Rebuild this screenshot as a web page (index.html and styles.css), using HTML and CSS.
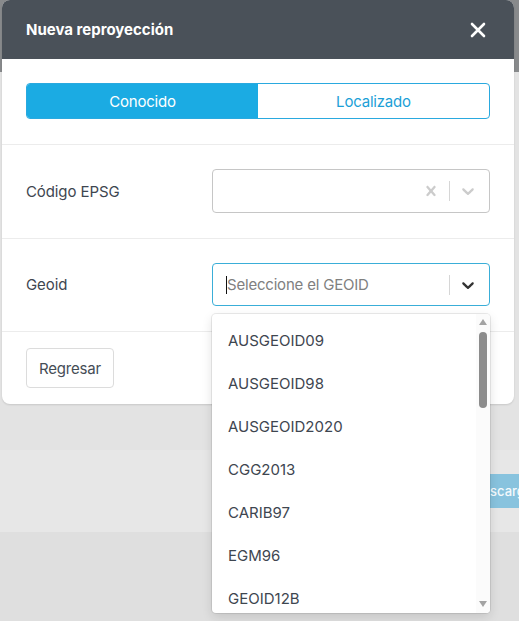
FILE: index.html
```
<!DOCTYPE html>
<html lang="es">
<head>
<meta charset="utf-8">
<title>Nueva reproyección</title>
<link rel="stylesheet" href="styles.css">
</head>
<body>
<div class="page">
  <div class="bg-top"></div>
  <div class="bg-a"></div>
  <div class="bg-b"><span class="bg-btn">Descargar</span></div>
  <div class="bg-c"></div>
</div>

<div class="modal">
  <div class="modal-header">
    <h1 class="modal-title">Nueva reproyección</h1>
    <svg class="close-icon" viewBox="0 0 16 16" width="16" height="16"><path d="M2 2 L14 14 M14 2 L2 14" stroke="#fff" stroke-width="2.6" stroke-linecap="round"/></svg>
  </div>

  <div class="section">
    <div class="tabs">
      <div class="tab tab-active">Conocido</div>
      <div class="tab">Localizado</div>
    </div>
  </div>

  <div class="section row">
    <div class="label">Código EPSG</div>
    <div class="select">
      <div class="value"></div>
      <div class="indicator"><svg viewBox="0 0 20 20" width="20" height="20"><path fill="#cccccc" d="M14.348 14.849c-0.469 0.469-1.229 0.469-1.697 0l-2.651-3.030-2.651 3.029c-0.469 0.469-1.229 0.469-1.697 0-0.469-0.469-0.469-1.229 0-1.697l2.758-3.15-2.759-3.152c-0.469-0.469-0.469-1.228 0-1.697s1.228-0.469 1.697 0l2.652 3.031 2.651-3.031c0.469-0.469 1.228-0.469 1.697 0s0.469 1.229 0 1.697l-2.758 3.152 2.758 3.150c0.469 0.469 0.469 1.229 0 1.698z"/></svg></div>
      <span class="sep"></span>
      <div class="indicator"><svg viewBox="0 0 20 20" width="20" height="20"><path fill="#cccccc" d="M4.516 7.548c0.436-0.446 1.043-0.481 1.576 0l3.908 3.747 3.908-3.747c0.533-0.481 1.141-0.446 1.574 0 0.436 0.445 0.408 1.197 0 1.615-0.406 0.418-4.695 4.502-4.695 4.502-0.217 0.223-0.502 0.335-0.787 0.335s-0.57-0.112-0.789-0.335c0 0-4.287-4.084-4.695-4.502s-0.436-1.170 0-1.615z"/></svg></div>
    </div>
  </div>

  <div class="section row">
    <div class="label">Geoid</div>
    <div class="select-wrap">
      <div class="select select-focus">
        <div class="value"><span class="caret"></span><span class="placeholder">Seleccione el GEOID</span></div>
        <span class="sep"></span>
        <div class="indicator"><svg viewBox="0 0 20 20" width="20" height="20"><path fill="#333333" d="M4.516 7.548c0.436-0.446 1.043-0.481 1.576 0l3.908 3.747 3.908-3.747c0.533-0.481 1.141-0.446 1.574 0 0.436 0.445 0.408 1.197 0 1.615-0.406 0.418-4.695 4.502-4.695 4.502-0.217 0.223-0.502 0.335-0.787 0.335s-0.57-0.112-0.789-0.335c0 0-4.287-4.084-4.695-4.502s-0.436-1.170 0-1.615z"/></svg></div>
      </div>
      <div class="menu">
        <ul class="options">
          <li>AUSGEOID09</li>
          <li>AUSGEOID98</li>
          <li>AUSGEOID2020</li>
          <li>CGG2013</li>
          <li>CARIB97</li>
          <li>EGM96</li>
          <li>GEOID12B</li>
        </ul>
        <div class="scrollbar">
          <span class="arrow-up"></span>
          <span class="thumb"></span>
          <span class="track-fill"></span>
          <span class="arrow-down"></span>
        </div>
      </div>
    </div>
  </div>

  <div class="footer">
    <button class="btn">Regresar</button>
  </div>
</div>
</body>
</html>
```
FILE: styles.css
```
* { box-sizing: border-box; }
html, body { margin: 0; padding: 0; }
body {
  width: 519px;
  height: 621px;
  overflow: hidden;
  position: relative;
  font-family: Inter, "Liberation Sans", sans-serif;
  background: #dedede;
}

.page { display: flex; flex-direction: column; height: 621px; }
.bg-top { height: 72px; background: #888a8c; }
.bg-a { height: 378px; background: #e3e3e3; }
.bg-b {
  height: 82px;
  background: #e7e7e7;
  display: flex;
  align-items: center;
}
.bg-btn {
  margin-left: 459px;
  height: 34px;
  padding: 0 14px;
  background: #88c3de;
  color: #f4fafd;
  font-size: 13px;
  font-weight: 500;
  display: flex;
  align-items: center;
  white-space: nowrap;
}
.bg-c { flex: 1; background: #dfdfdf; }

.modal {
  position: absolute;
  top: 0;
  left: 2px;
  width: 512px;
  background: #fff;
  border-radius: 8px;
  box-shadow: 0 1px 2px rgba(0,0,0,0.12);
}
.modal-header {
  height: 59px;
  background: #4a5159;
  border-radius: 8px 8px 0 0;
  display: flex;
  align-items: center;
  justify-content: space-between;
  padding: 0 28px 0 24px;
}
.modal-title {
  margin: 0;
  color: #fff;
  font-size: 15px;
  font-weight: 700;
  letter-spacing: 0;
}
.close-icon { display: block; }

.section {
  padding: 24px 24px 25px;
  border-bottom: 1px solid #ececec;
}
.tabs {
  display: flex;
  height: 36px;
  border: 1px solid #2aa9df;
  border-radius: 4px;
  overflow: hidden;
}
.tab {
  flex: 1;
  display: flex;
  align-items: center;
  justify-content: center;
  font-size: 15px;
  color: #1c9fd7;
  letter-spacing: -0.2px;
}
.tab-active { background: #1babe3; color: #fff; }

.row { display: flex; align-items: center; }
.row .label {
  width: 186px;
  font-size: 15px;
  color: #3e4650;
  letter-spacing: -0.1px;
}
.select-wrap { position: relative; width: 278px; }
.select {
  width: 278px;
  height: 44px;
  border: 1px solid #c6c6c6;
  border-radius: 4px;
  display: flex;
  align-items: center;
  padding-right: 3px;
  background: #fff;
}
.select-focus { border-color: #3aaed8; height: 43px; }
.value {
  flex: 1;
  display: flex;
  align-items: center;
  padding-left: 13px;
  font-size: 15px;
  letter-spacing: -0.2px;
}
.caret { width: 1px; height: 18px; background: #111; }
.placeholder { color: #808080; }
.sep { width: 1px; height: 20px; background: #d6d6d6; }
.indicator { padding: 0 8px; display: flex; align-items: center; }
.indicator svg { display: block; }

.menu {
  position: absolute;
  top: 51px;
  left: 0;
  width: 278px;
  height: 299px;
  background: #fff;
  border-radius: 4px;
  box-shadow: 0 0 0 1px rgba(0,0,0,0.08), 0 4px 11px rgba(0,0,0,0.12);
  display: flex;
  overflow: hidden;
  z-index: 2;
}
.options {
  flex: 1;
  list-style: none;
  margin: 0;
  padding: 5px 0 0;
}
.options li {
  padding: 12px 16px;
  line-height: 19px;
  font-size: 15px;
  color: #3e4650;
}
.scrollbar {
  width: 14px;
  background: #fbfbfb;
  display: flex;
  flex-direction: column;
  align-items: center;
  padding: 5px 0 6px;
}
.arrow-up {
  width: 0; height: 0;
  border-left: 4px solid transparent;
  border-right: 4px solid transparent;
  border-bottom: 6px solid #a3a3a3;
}
.thumb {
  margin-top: 7px;
  width: 8px;
  height: 76px;
  border-radius: 4px;
  background: #8c8c8c;
}
.track-fill { flex: 1; }
.arrow-down {
  width: 0; height: 0;
  border-left: 4px solid transparent;
  border-right: 4px solid transparent;
  border-top: 6px solid #a3a3a3;
}

.footer { padding: 16px 24px; }
.btn {
  height: 40px;
  padding: 0 12px;
  background: #fff;
  border: 1px solid #dcdcdc;
  border-radius: 4px;
  font-family: inherit;
  font-size: 15px;
  color: #454d56;
  letter-spacing: -0.2px;
}
```
